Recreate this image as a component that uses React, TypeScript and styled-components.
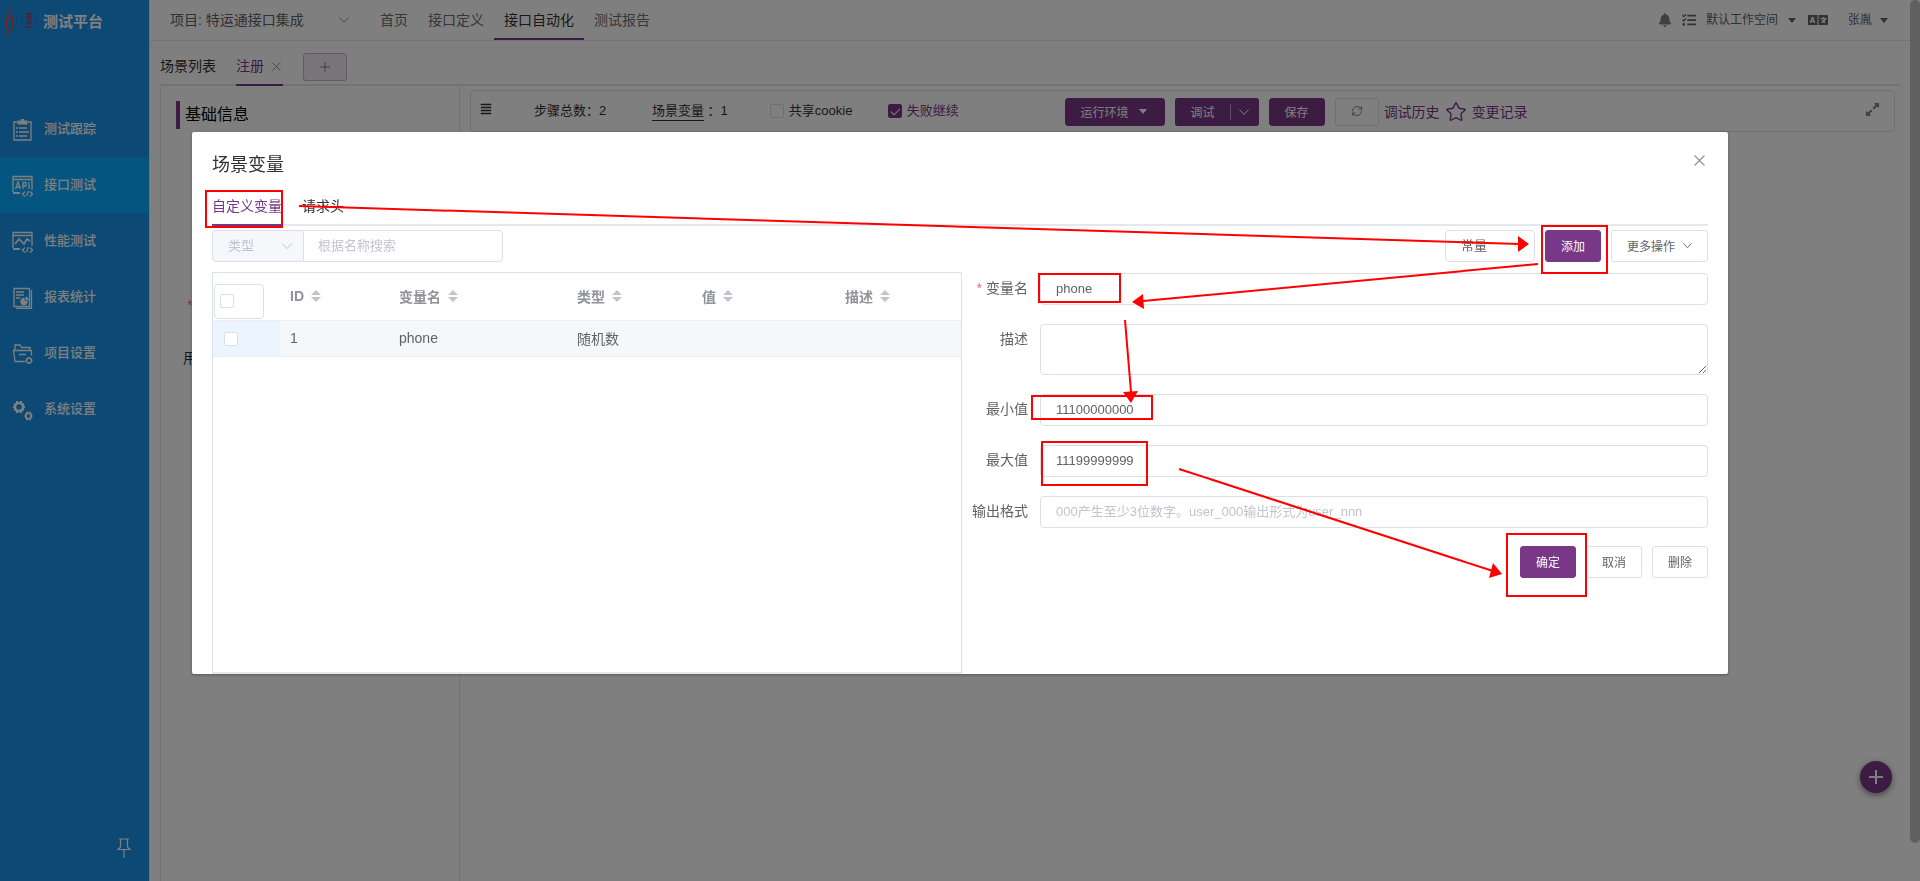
import React, { useState } from "react";
import styled, { createGlobalStyle, css } from "styled-components";
import { FaAlignJustify, FaBell, FaExpandAlt, FaLanguage, FaTasks } from "react-icons/fa";
import { RefreshCw, Star } from "lucide-react";

const color = {
  primary: "#783887",
  text: "#606266",
  title: "#303133",
  muted: "#909399",
  hint: "#c0c4cc",
  border: "#dcdfe6",
  line: "#e4e7ed",
  soft: "#f5f7fa",
  icon: "#7e8488",
  mark: "#ff0000",
};

const GlobalStyle = createGlobalStyle`
  * { box-sizing: border-box; }
  body {
    margin: 0;
    background: #fff;
    color: ${color.title};
    font-family: "Liberation Sans", "Noto Sans CJK SC", sans-serif;
    font-size: 14px;
  }
  button, input, select, textarea { font-family: inherit; margin: 0; }
  a { color: inherit; text-decoration: none; }
  svg { display: block; flex: none; }
`;

/* ---------- page frame ---------- */

const Shell = styled.div`
  display: flex;
  min-height: 100vh;
  padding-right: 10px;
`;

const Sidebar = styled.aside`
  display: flex;
  flex-direction: column;
  width: 150px;
  flex: none;
  background: #1894ea;
  border-right: 1px solid #e6e6e6;
  color: #fff;
`;

const Brand = styled.div`
  display: flex;
  align-items: center;
  gap: 5px;
  height: 41px;
  margin-bottom: 60px;
  padding-left: 5px;
  font-size: 15px;
  font-weight: 700;
`;

const SideLink = styled.a<{ $active?: boolean }>`
  display: flex;
  align-items: center;
  gap: 11px;
  height: 56px;
  padding: 0 0 3px 12px;
  font-size: 13px;
  font-weight: 500;
  background: ${(p) => (p.$active ? "#08aaff" : "transparent")};
  svg {
    margin-top: 4px;
  }
`;

const PinButton = styled.button`
  margin: auto 18px 23px auto;
  padding: 0;
  border: 0;
  background: none;
  color: #fff;
`;

const Main = styled.main`
  display: flex;
  flex-direction: column;
  flex: 1;
  min-width: 0;
`;

const Header = styled.header`
  display: flex;
  align-items: center;
  height: 41px;
  padding: 0 20px;
  border-bottom: 1px solid #e6e6e6;
`;

const Nav = styled.nav`
  display: flex;
  margin-left: 20px;
  white-space: nowrap;
`;

const NavLink = styled.a<{ $active?: boolean }>`
  height: 39px;
  padding: 0 10px;
  line-height: 38px;
  color: ${(p) => (p.$active ? color.title : "#6c6e72")};
  border-bottom: 2px solid ${(p) => (p.$active ? color.primary : "transparent")};
`;

const HeaderTools = styled.div`
  display: flex;
  align-items: center;
  gap: 10px;
  margin-left: auto;
  font-size: 12px;
  color: ${color.text};
  white-space: nowrap;
`;

const MenuButton = styled.button`
  display: flex;
  align-items: center;
  gap: 8px;
  padding: 0;
  border: 0;
  background: none;
  color: inherit;
  font-size: 12px;
  line-height: 20px;
`;

const UserMenu = styled(MenuButton)`
  gap: 6px;
  margin-left: 10px;
`;

const PageTabs = styled.div`
  display: flex;
  height: 40px;
  margin: 5px 10px 0;
  line-height: 40px;
  box-shadow: inset 0 -2px ${color.line};
`;

const PageTab = styled.a<{ $active?: boolean }>`
  display: flex;
  align-items: center;
  gap: 8px;
  margin-right: 20px;
  padding-right: ${(p) => (p.$active ? 2 : 0)}px;
  color: ${(p) => (p.$active ? color.primary : color.title)};
  box-shadow: ${(p) => (p.$active ? `inset 0 -2px ${color.primary}` : "none")};
`;

const AddTab = styled.button`
  display: flex;
  align-items: center;
  justify-content: center;
  align-self: flex-end;
  width: 44px;
  height: 28px;
  margin-bottom: 5px;
  padding: 0;
  border: 1px solid #c9afcf;
  border-radius: 3px;
  background: #f2ebf3;
  color: ${color.primary};
`;

const Workspace = styled.div`
  display: flex;
  flex: 1;
  margin: 0 10px;
`;

const InfoPanel = styled.section`
  width: 300px;
  flex: none;
  padding: 15px;
  border: 1px solid ${color.line};
  border-width: 0 1px;
`;

const SectionTitle = styled.h2`
  margin: 0;
  padding-left: 5px;
  border-left: 4px solid ${color.primary};
  color: #000;
  font-size: 16px;
  font-weight: 400;
  line-height: 28px;
`;

const SideField = styled.div`
  display: flex;
  flex-direction: column;
  gap: 33px;
  margin-top: 166px;
  padding-left: 7px;
  line-height: 20px;
`;

const Required = styled.span`
  margin-right: 4px;
  color: #f56c6c;
`;

const SidePad = styled.span`
  padding-left: 4px;
`;

const Editor = styled.section`
  flex: 1;
  min-width: 0;
  padding: 4px 5px 0 10px;
`;

const Toolbar = styled.div`
  display: grid;
  grid-template-columns: repeat(24, minmax(0, 1fr));
  align-items: center;
  height: 42px;
  padding: 0 4px;
  border: 1px solid ${color.border};
  border-radius: 4px;
  font-size: 13px;
  white-space: nowrap;
`;

const Cell = styled.div<{ $span: number }>`
  display: flex;
  align-items: center;
  grid-column: span ${(p) => p.$span};
  line-height: 20px;
`;

const IconCell = styled(Cell)`
  padding: 0 0 4px 5px;
`;

const EndCell = styled(Cell)`
  justify-content: flex-end;
  padding: 0 10px 4px 0;
  color: ${color.icon};
`;

const VarLink = styled.a`
  line-height: 18px;
  border-bottom: 1px solid ${color.title};
`;

const Actions = styled(Cell)`
  gap: 10px;
  padding-top: 2px;
`;

const ActionLinks = styled.div`
  display: flex;
  align-items: center;
  gap: 5px;
  margin-left: -5px;
  font-size: 14px;
  color: ${color.primary};
`;

const CheckLabel = styled.label<{ $on?: boolean }>`
  display: flex;
  align-items: center;
  gap: 5px;
  color: ${(p) => (p.$on ? color.primary : color.title)};
`;

const Check = styled.input.attrs({ type: "checkbox" })`
  appearance: none;
  display: block;
  flex: none;
  width: 14px;
  height: 14px;
  border: 1px solid ${color.border};
  border-radius: 2px;
  background: #fff;
  &:checked {
    background: ${color.primary};
    border-color: ${color.primary};
  }
  &:checked::after {
    content: "";
    display: block;
    width: 4px;
    height: 8px;
    margin: 1px 0 0 4px;
    border: solid #fff;
    border-width: 0 1px 1px 0;
    transform: rotate(45deg);
  }
`;

const FloatingAdd = styled.button`
  position: fixed;
  right: 28px;
  bottom: 88px;
  display: flex;
  align-items: center;
  justify-content: center;
  width: 32px;
  height: 32px;
  padding: 0;
  border: 0;
  border-radius: 50%;
  background: ${color.primary};
  color: #fff;
  box-shadow: 0 2px 6px rgba(0, 0, 0, 0.5);
`;

const ScrollThumb = styled.div`
  position: fixed;
  top: 0;
  right: 0;
  bottom: 38px;
  width: 10px;
  border-radius: 5px;
  background: #c1c1c1;
`;

/* ---------- shared controls ---------- */

const Button = styled.button<{ $primary?: boolean; $tall?: boolean }>`
  display: inline-flex;
  align-items: center;
  justify-content: center;
  gap: 8px;
  height: ${(p) => (p.$tall ? 32 : 28)}px;
  padding: 0 15px 2px;
  border: 1px solid ${(p) => (p.$primary ? color.primary : color.border)};
  border-radius: 3px;
  background: ${(p) => (p.$primary ? color.primary : "#fff")};
  color: ${(p) => (p.$primary ? "#fff" : color.text)};
  font-size: 12px;
  white-space: nowrap;
`;

const SplitGroup = styled.div`
  display: flex;
`;

const SplitMain = styled(Button)`
  border-right: 0;
  border-radius: 3px 0 0 3px;
`;

const SplitMore = styled(Button)`
  justify-content: flex-start;
  width: 29px;
  padding: 0;
  border-left: 0;
  border-radius: 0 3px 3px 0;
  &::before {
    content: "";
    width: 1px;
    height: 16px;
    background: rgba(255, 255, 255, 0.5);
  }
`;

const fieldBox = css`
  border: 1px solid ${color.border};
  border-radius: 4px;
  background: #fff;
  color: ${color.text};
  font-size: 13px;
  outline: none;
  &::placeholder {
    color: ${color.hint};
  }
`;

const TextInput = styled.input`
  ${fieldBox}
  width: 100%;
  height: 32px;
  padding: 0 15px 2px;
`;

const SearchInput = styled(TextInput)`
  width: 200px;
  margin-left: -1px;
  padding: 0 14px 2px;
  border-radius: 0 4px 4px 0;
`;

const TextArea = styled.textarea`
  ${fieldBox}
  display: block;
  width: 100%;
  height: 51px;
  padding: 5px 15px;
  resize: vertical;
`;

const SelectWrap = styled.span<{ $width: number }>`
  position: relative;
  display: inline-flex;
  width: ${(p) => p.$width}px;
  color: ${color.hint};
  svg {
    position: absolute;
    top: 50%;
    right: 12px;
    margin-top: -5px;
    pointer-events: none;
  }
`;

const Select = styled.select<{ $soft?: boolean }>`
  ${fieldBox}
  appearance: none;
  width: 100%;
  height: 32px;
  padding: 0 15px 2px;
  ${(p) =>
    p.$soft &&
    css`
      background: ${color.soft};
      color: ${color.hint};
      border-radius: 4px 0 0 4px;
    `}
`;

const ProjectWrap = styled(SelectWrap)`
  color: ${color.muted};
  svg {
    right: 1px;
  }
`;

const ProjectSelect = styled(Select)`
  padding: 0;
  border: 0;
  font-size: 14px;
`;

/* ---------- dialog ---------- */

const Overlay = styled.div`
  position: fixed;
  inset: 0;
  overflow: auto;
  background: rgba(0, 0, 0, 0.5);
`;

const Dialog = styled.div`
  position: relative;
  width: 80%;
  margin: 132px auto 50px;
  padding: 22px 20px 0;
  border-radius: 2px;
  background: #fff;
  box-shadow: 0 1px 3px rgba(0, 0, 0, 0.3);
`;

const DialogHead = styled.div`
  display: flex;
  align-items: center;
  justify-content: space-between;
  margin-bottom: 10px;
`;

const DialogTitle = styled.h1`
  margin: 0;
  font-size: 18px;
  font-weight: 400;
  line-height: 22px;
`;

const CloseButton = styled.button`
  margin: 0;
  padding: 0 3px 10px;
  border: 0;
  background: none;
`;

const DialogTabs = styled.div`
  display: flex;
  gap: 20px;
  box-shadow: inset 0 -2px ${color.line};
`;

const DialogTab = styled.button<{ $active?: boolean }>`
  height: 40px;
  padding: 0;
  border: 0;
  background: none;
  color: ${(p) => (p.$active ? color.primary : color.title)};
  font-size: 14px;
  line-height: 40px;
  box-shadow: ${(p) => (p.$active ? `inset 0 -2px ${color.primary}` : "none")};
`;

const FilterRow = styled.div`
  display: flex;
  justify-content: space-between;
  margin: 4px 0 10px;
`;

const FilterGroup = styled.div`
  display: flex;
`;

const FilterActions = styled.div`
  display: flex;
  gap: 10px;
`;

const DialogBody = styled.div`
  display: grid;
  grid-template-columns: calc(50% + 2px) minmax(0, 1fr);
`;

const TableCard = styled.div`
  height: 402px;
  border: 1px solid ${color.border};
  border-bottom: 2px solid ${color.line};
`;

const Table = styled.table`
  width: 100%;
  table-layout: fixed;
  border-collapse: separate;
  border-spacing: 0;
  color: ${color.text};
  th,
  td {
    padding: 0 10px 2px;
    text-align: left;
    border-bottom: 1px solid #ebeef5;
  }
  th {
    height: 48px;
    color: ${color.muted};
    font-weight: 700;
  }
  td {
    height: 36px;
    background: ${color.soft};
  }
  th:first-child {
    padding: 0 1px 1px;
    vertical-align: bottom;
  }
  td:first-child {
    padding: 0 11px;
    background: #ecf4ff;
  }
`;

const SelectAll = styled.label`
  display: flex;
  align-items: center;
  width: 50px;
  height: 35px;
  padding: 0 5px 1px;
  border: 1px solid ${color.border};
  border-radius: 4px;
`;

const HeadCell = styled.span`
  display: flex;
  align-items: center;
  gap: 7px;
`;

const Form = styled.form`
  display: grid;
  align-content: start;
  gap: 19px;
  padding-top: 1px;
`;

const FormRow = styled.div`
  display: grid;
  grid-template-columns: 66px minmax(0, 1fr);
  column-gap: 12px;
`;

const FormLabel = styled.label`
  color: ${color.text};
  line-height: 30px;
  text-align: right;
  white-space: nowrap;
`;

const FormButtons = styled.div`
  display: flex;
  justify-content: flex-end;
  gap: 10px;
  margin-top: -1px;
`;

const Marks = styled.svg`
  position: absolute;
  top: 0;
  left: 0;
  overflow: visible;
  pointer-events: none;
`;

/* ---------- icons ---------- */

const Chevron = ({ size = 10 }: { size?: number }) => (
  <svg width={size} height={size} viewBox="0 0 10 10" fill="none" stroke="currentColor">
    <path d="M.5 2.5 5 7.5l4.5-5" />
  </svg>
);

const Caret = () => (
  <svg width="12" height="5" viewBox="0 0 12 5" fill="currentColor">
    <path d="M2 0h8L6 5z" />
  </svg>
);

const Cross = ({ size }: { size: number }) => (
  <svg width={size} height={size} viewBox="0 0 10 10" fill="none" stroke={color.muted} strokeWidth="1.1">
    <path d="M.5.5l9 9M9.5.5l-9 9" />
  </svg>
);

const Plus = ({ size, width }: { size: number; width: number }) => (
  <svg width={size} height={size} viewBox="0 0 14 14" fill="none" stroke="currentColor" strokeWidth={width}>
    <path d="M7 0v14M0 7h14" />
  </svg>
);

const SortIcon = () => (
  <svg width="10" height="12" viewBox="0 0 10 12" fill={color.hint}>
    <path d="M5 0l5 5H0zM0 7h10l-5 5z" />
  </svg>
);

const PinIcon = () => (
  <svg width="14" height="20" viewBox="0 0 14 20" fill="none" stroke="currentColor" strokeWidth="1.2">
    <path d="M2 1h10M3.5 1v8L1 11.5h12L10.5 9V1M7 12v8" />
  </svg>
);

const BrandLogo = () => (
  <svg width="33" height="30" viewBox="0 0 33 30" fill="none">
    <path d="M9 0C3 4 0 12 1 20c.5 4 1.5 8 3 10-.5-4-1.5-9-1-15 .5-6 2.5-11 6-15z" fill="#f0463c" />
    <path d="M5 12c2.500-2 3 1 2.500 5-.3 4-1.500 7-3 10" stroke="#e0463c" strokeWidth="1.500" />
    <path d="M10 5c3 5 2 14-2 22M16 7c1 5 1 12 0 17M19 8v14" stroke="#2b7fdc" />
    <path d="M21 8h6M24 6v5M21 11h6M21.5 13.5h5M22 16l4 2M26 15l-4 4M21 21h6" stroke="#a8406c" strokeWidth="1.500" />
    <path d="M31 8c1 4 1 11 0 15" stroke="#2b7fdc" />
  </svg>
);

const sideIcons: Record<string, React.ReactNode> = {
  track: (
    <>
      <path d="M5 3H2v18h17V3h-3" />
      <path d="M6.5 2.5h8v2h-8zM9 1h3" strokeWidth="2" />
      <path d="M4 9h2M7 9h8M4 13h2M7 13h10M4 17h2M7 17h8" />
    </>
  ),
  api: (
    <>
      <path d="M1 17V1.5h19V15M1 4.5h19" />
      <path d="M1 18h7" strokeWidth="2" />
      <path d="M3.5 14 6 7l2.500 7M4.5 12h3M11 14V7.5h3V11h-3M17 7v7" />
      <path d="M13 16.5 10.500 19l2.500 2.500M18 16.5l2.500 2.500-2.500 2.500M16.5 16l-2 5" />
    </>
  ),
  perf: (
    <>
      <path d="M1 17V1.5h19V15M1 4.5h19" />
      <path d="M1 18h7" strokeWidth="2" />
      <path d="M3 13l4-5 5 5 3-5 3 2" strokeWidth="1.6" />
      <path d="M13 16.5 10.500 19l2.500 2.500M18 16.5l2.500 2.500-2.500 2.500M16.5 16l-2 5" />
    </>
  ),
  report: (
    <>
      <path d="M2 1.5h15.5v18H2zM19.5 3v18.5H4M4 5h8M4 8h8M4 11h4" />
      <path d="M12 11.5a3 3 0 1 0 3 3h-3z" fill="currentColor" />
      <path d="M14 10.5a2.5 2.5 0 0 1 2 2h-2z" fill="currentColor" />
    </>
  ),
  project: (
    <>
      <path d="M13 18.5H3L1.5 7.5h18v5M3 7V2h5l1.5 2.5H18V7M7 11.5h7" />
      <circle cx="17" cy="17.5" r="2.5" />
      <path d="M17 14v1M17 20v1M13.5 17.5h1M19.5 17.5h1" />
    </>
  ),
  system: (
    <>
      <circle cx="7" cy="8" r="4" strokeWidth="2.5" />
      <path d="M5 2v3M9 2v3M5 11v3M9 11v3M1 8h2M11 8h2M2 5l2 1M10 10l2 1M2 11l2-1M10 6l2-1" strokeWidth="2" />
      <circle cx="16.5" cy="17" r="2.8" strokeWidth="1.8" />
      <path d="M15 12.5v2M18 12.5v2M15 19.5v2M18 19.5v2M12.5 17h2M18.5 17h2" />
    </>
  ),
};

const menu = [
  { icon: "track", label: "测试跟踪" },
  { icon: "api", label: "接口测试", active: true },
  { icon: "perf", label: "性能测试" },
  { icon: "report", label: "报表统计" },
  { icon: "project", label: "项目设置" },
  { icon: "system", label: "系统设置" },
];

const nav = ["首页", "接口定义", "接口自动化", "测试报告"];

const columns = [
  { title: "ID", width: 109 },
  { title: "变量名", width: 178 },
  { title: "类型", width: 125 },
  { title: "值", width: 143 },
  { title: "描述", width: undefined },
];

/* Guide boxes and arrows, in pixels from the dialog's top left corner. */
const boxes = [
  [14, 59, 76, 36],
  [1350, 94, 65, 47],
  [847, 142, 81, 28],
  [840, 264, 120, 23],
  [850, 310, 105, 43],
  [1315, 402, 79, 62],
];

const arrows = [
  { line: "M107 74 1328 112", head: "M1337 112l-11-8v16z" },
  { line: "M1346 132 951 169", head: "M940 170l12 7-1-15z" },
  { line: "M933 188 939 260", head: "M939 271l7-12-15 1z" },
  { line: "M987 337 1301 439", head: "M1310 442l-9-11-4 15z" },
];

export default function App() {
  const [shareCookie, setShareCookie] = useState(false);
  const [keepGoing, setKeepGoing] = useState(true);

  return (
    <>
      <GlobalStyle />
      <Shell>
        <Sidebar>
          <Brand>
            <BrandLogo />
            测试平台
          </Brand>
          {menu.map((m) => (
            <SideLink key={m.label} href="#" $active={m.active}>
              <svg width="21" height="22" viewBox="0 0 21 22" fill="none" stroke="currentColor" strokeWidth="1.3">
                {sideIcons[m.icon]}
              </svg>
              {m.label}
            </SideLink>
          ))}
          <PinButton aria-label="固定菜单">
            <PinIcon />
          </PinButton>
        </Sidebar>

        <Main>
          <Header>
            <ProjectWrap $width={180}>
              <ProjectSelect aria-label="项目">
                <option>项目: 特运通接口集成</option>
              </ProjectSelect>
              <Chevron />
            </ProjectWrap>
            <Nav>
              {nav.map((n) => (
                <NavLink key={n} href="#" $active={n === "接口自动化"}>
                  {n}
                </NavLink>
              ))}
            </Nav>
            <HeaderTools>
              <FaBell size={14} color={color.icon} />
              <FaTasks size={14} />
              <MenuButton>
                默认工作空间
                <Caret />
              </MenuButton>
              <FaLanguage size={20} />
              <UserMenu>
                张胤
                <Caret />
              </UserMenu>
            </HeaderTools>
          </Header>

          <PageTabs>
            <PageTab href="#">场景列表</PageTab>
            <PageTab href="#" $active>
              注册
              <Cross size={9} />
            </PageTab>
            <AddTab aria-label="新建标签">
              <Plus size={10} width={1} />
            </AddTab>
          </PageTabs>

          <Workspace>
            <InfoPanel>
              <SectionTitle>基础信息</SectionTitle>
              <SideField>
                <SidePad>
                  <Required>*</Required>
                </SidePad>
                <span>用</span>
              </SideField>
            </InfoPanel>
            <Editor>
              <Toolbar>
                <IconCell $span={1}>
                  <FaAlignJustify size={12} />
                </IconCell>
                <Cell $span={2}>步骤总数：2</Cell>
                <Cell $span={2}>
                  <VarLink href="#">场景变量</VarLink>&nbsp;：1
                </Cell>
                <Cell $span={2}>
                  <CheckLabel>
                    <Check checked={shareCookie} onChange={(e) => setShareCookie(e.target.checked)} />
                    共享cookie
                  </CheckLabel>
                </Cell>
                <Cell $span={3}>
                  <CheckLabel $on={keepGoing}>
                    <Check checked={keepGoing} onChange={(e) => setKeepGoing(e.target.checked)} />
                    失败继续
                  </CheckLabel>
                </Cell>
                <Actions $span={13}>
                  <Button $primary>
                    运行环境
                    <Caret />
                  </Button>
                  <SplitGroup>
                    <SplitMain $primary>调试</SplitMain>
                    <SplitMore $primary aria-label="更多调试方式">
                      <Chevron />
                    </SplitMore>
                  </SplitGroup>
                  <Button $primary>保存</Button>
                  <Button aria-label="刷新">
                    <RefreshCw size={12} strokeWidth={1.5} />
                  </Button>
                  <ActionLinks>
                    <a href="#">调试历史</a>
                    <Star size={22} strokeWidth={1.5} />
                    <a href="#">变更记录</a>
                  </ActionLinks>
                </Actions>
                <EndCell $span={1}>
                  <FaExpandAlt size={15} />
                </EndCell>
              </Toolbar>
            </Editor>
          </Workspace>
        </Main>
      </Shell>
      <FloatingAdd aria-label="添加步骤">
        <Plus size={14} width={2} />
      </FloatingAdd>
      <ScrollThumb />

      <Overlay>
        <Dialog role="dialog" aria-labelledby="dialog-title">
          <DialogHead>
            <DialogTitle id="dialog-title">场景变量</DialogTitle>
            <CloseButton aria-label="关闭">
              <Cross size={11} />
            </CloseButton>
          </DialogHead>
          <DialogTabs>
            <DialogTab $active>自定义变量</DialogTab>
            <DialogTab>请求头</DialogTab>
          </DialogTabs>

          <FilterRow>
            <FilterGroup>
              <SelectWrap $width={92}>
                <Select $soft aria-label="类型">
                  <option>类型</option>
                </Select>
                <Chevron />
              </SelectWrap>
              <SearchInput aria-label="搜索" placeholder="根据名称搜索" />
            </FilterGroup>
            <FilterActions>
              <SelectWrap $width={90}>
                <Select aria-label="变量类型">
                  <option>常量</option>
                </Select>
                <Chevron />
              </SelectWrap>
              <Button $primary $tall>
                添加
              </Button>
              <Button $tall>
                更多操作
                <Chevron size={9} />
              </Button>
            </FilterActions>
          </FilterRow>

          <DialogBody>
            <TableCard>
              <Table>
                <colgroup>
                  <col width={67} />
                  {columns.map((c) => (
                    <col key={c.title} width={c.width} />
                  ))}
                </colgroup>
                <thead>
                  <tr>
                    <th>
                      <SelectAll>
                        <Check aria-label="全选" />
                      </SelectAll>
                    </th>
                    {columns.map((c) => (
                      <th key={c.title}>
                        <HeadCell>
                          {c.title}
                          <SortIcon />
                        </HeadCell>
                      </th>
                    ))}
                  </tr>
                </thead>
                <tbody>
                  <tr>
                    <td>
                      <Check aria-label="选择 phone" />
                    </td>
                    <td>1</td>
                    <td>phone</td>
                    <td>随机数</td>
                    <td />
                    <td />
                  </tr>
                </tbody>
              </Table>
            </TableCard>

            <Form onSubmit={(e) => e.preventDefault()}>
              <FormRow>
                <FormLabel htmlFor="name">
                  <Required>*</Required>变量名
                </FormLabel>
                <TextInput id="name" defaultValue="phone" />
              </FormRow>
              <FormRow>
                <FormLabel htmlFor="desc">描述</FormLabel>
                <TextArea id="desc" />
              </FormRow>
              <FormRow>
                <FormLabel htmlFor="min">最小值</FormLabel>
                <TextInput id="min" defaultValue="11100000000" />
              </FormRow>
              <FormRow>
                <FormLabel htmlFor="max">最大值</FormLabel>
                <TextInput id="max" defaultValue="11199999999" />
              </FormRow>
              <FormRow>
                <FormLabel htmlFor="format">输出格式</FormLabel>
                <TextInput id="format" placeholder="000产生至少3位数字。user_000输出形式为user_nnn" />
              </FormRow>
              <FormButtons>
                <Button $primary $tall>
                  确定
                </Button>
                <Button $tall>取消</Button>
                <Button $tall>删除</Button>
              </FormButtons>
            </Form>
          </DialogBody>

          <Marks width="1536" height="542" viewBox="0 0 1536 542" fill="none" aria-hidden="true">
            {boxes.map(([x, y, w, h]) => (
              <rect key={`${x}-${y}`} x={x} y={y} width={w} height={h} stroke={color.mark} strokeWidth="2" />
            ))}
            {arrows.map((a) => (
              <g key={a.line}>
                <path d={a.line} stroke={color.mark} strokeWidth="2" />
                <path d={a.head} fill={color.mark} />
              </g>
            ))}
          </Marks>
        </Dialog>
      </Overlay>
    </>
  );
}
